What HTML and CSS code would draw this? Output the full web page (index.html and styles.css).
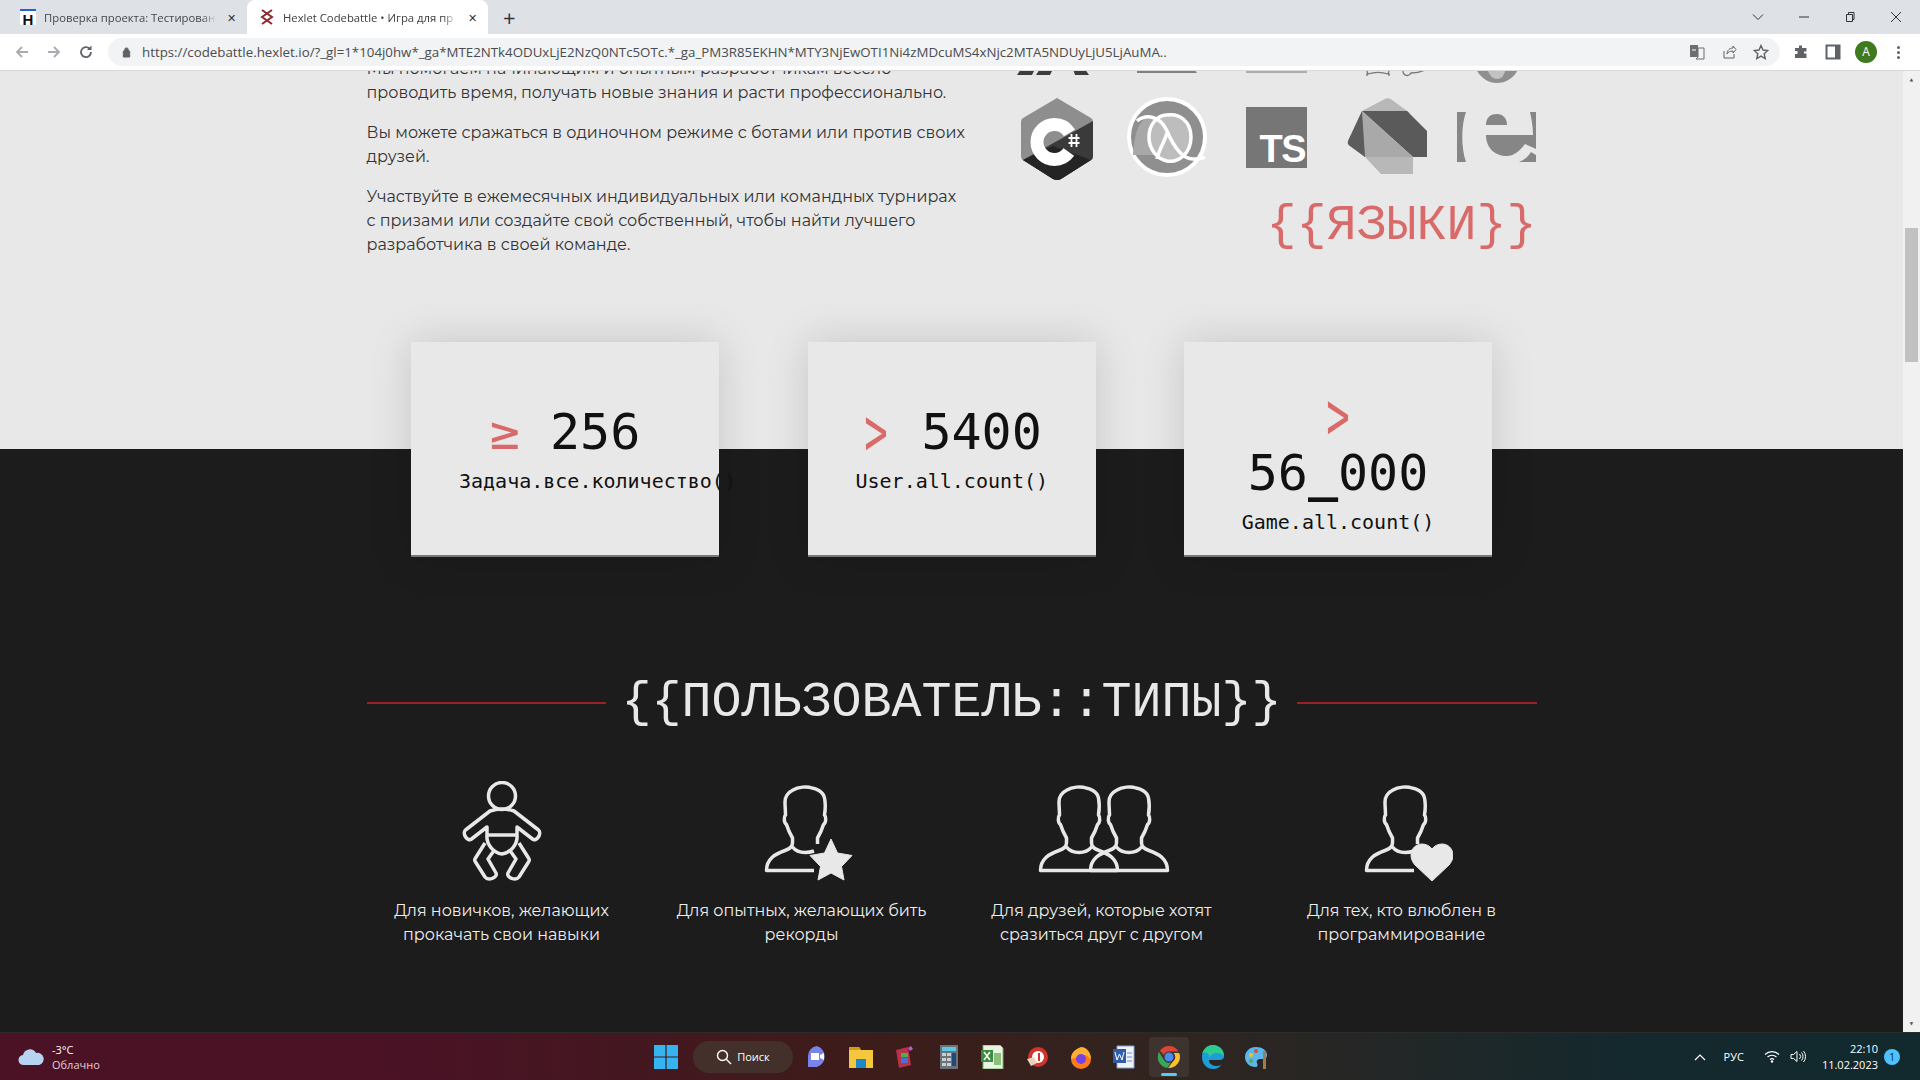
FILE: index.html
```html
<!DOCTYPE html>
<html lang="ru">
<head>
  <meta charset="utf-8">
  <title>Hexlet Codebattle</title>
  <link rel="stylesheet" href="styles.css">
</head>
<body>
  <svg class="defs" width="0" height="0">
    <defs>
      <path id="person" d="M1.500 89.500H78.500C78.500 78 70 73 60 69.500C56 68 52.500 66.500 52.500 62V57C56 51 57.500 47 58.500 43.500C61 42 61.500 36 59.500 34C60.500 28 60.500 22 59.500 17C58 10 50 7.500 47 7C42 5 33 6 28 9C22 12 20 16 20 21C20 25 20.500 30 20.500 34C18.500 36 19 42 21.500 43.500C22.500 47 24 51 27.500 57V62C27.500 66.500 24 68 20 69.500C10 73 1.500 78 1.500 89.500ZM27.500 66C31 70.500 36 71.500 40 71.500C44 71.500 49 70.500 52.500 66"/>
      <path id="person-half" d="M49 89.500H1.500C1.500 78 10 73 20 69.500C24 68 27.500 66.500 27.500 62V57C24 51 22.500 47 21.500 43.500C19 42 18.500 36 20.500 34C20.500 30 20 25 20 21C20 16 22 12 28 9C33 6 42 5 47 7C50 7.500 58 10 59.500 17C60.500 22 60.500 28 59.500 34C61.500 36 61 42 58.500 43.500C57.500 47 56 51 52.500 57V63M27.500 66C31 70.500 36 71.500 40 71.500C43 71.500 46 71 49 70"/>
    </defs>
  </svg>

  <!-- вкладки -->
  <div class="tabstrip">
    <div class="tab">
      <span class="favicon favicon-h">H</span>
      <span class="tab-title">Проверка проекта: Тестирован</span>
      <span class="tab-close">✕</span>
    </div>
    <div class="tab tab-active">
      <svg class="favicon" viewBox="0 0 16 16"><path d="M3 1l10 7-10 7M13 1L3 8l10 7" fill="none" stroke="#8c2a2e" stroke-width="2"/></svg>
      <span class="tab-title">Hexlet Codebattle • Игра для пр</span>
      <span class="tab-close">✕</span>
    </div>
    <span class="tab-new">+</span>
    <div class="window-btns">
      <svg viewBox="0 0 12 12"><path d="M1 3.500l5 5 5-5" fill="none" stroke="#333"/></svg>
      <svg viewBox="0 0 12 12"><path d="M1 6h10" stroke="#333"/></svg>
      <svg viewBox="0 0 12 12"><path d="M2.500 3.500h6v7h-6zM4.500 3.500v-2h5.500v7h-1.500" fill="none" stroke="#333"/></svg>
      <svg viewBox="0 0 12 12"><path d="M1 1l10 10M11 1L1 11" stroke="#333"/></svg>
    </div>
  </div>

  <!-- адресная строка -->
  <div class="toolbar">
    <svg class="nav-icon" viewBox="0 0 16 16"><path d="M14 8H3M8 3L3 8l5 5" fill="none" stroke="#a8abaf" stroke-width="1.800"/></svg>
    <svg class="nav-icon" viewBox="0 0 16 16"><path d="M2 8h11M8 3l5 5-5 5" fill="none" stroke="#a8abaf" stroke-width="1.800"/></svg>
    <svg class="nav-icon" viewBox="0 0 16 16"><path d="M13 8a5 5 0 1 1-1.500-3.500" fill="none" stroke="#5f6368" stroke-width="1.800"/><path d="M13.500 1.500v4.500h-4.500z" fill="#5f6368"/></svg>
    <div class="omnibox">
      <svg class="lock" viewBox="0 0 12 12"><path d="M2.500 5h7v6.500h-7zM4 5V3.500a2 2 0 0 1 4 0V5" fill="#5f6368" stroke="#5f6368"/></svg>
      <span class="url">https://codebattle.hexlet.io/?_gl=1*104j0hw*_ga*MTE2NTk4ODUxLjE2NzQ0NTc5OTc.*_ga_PM3R85EKHN*MTY3NjEwOTI1Ni4zMDcuMS4xNjc2MTA5NDUyLjU5LjAuMA..</span>
      <div class="omni-icons">
        <svg viewBox="0 0 16 16"><path d="M1 1h8v12H1z" fill="#6b6e72"/><path d="M9 4h6v11H7l2-2z" fill="none" stroke="#6b6e72"/><path d="M3 6h4" stroke="#fff"/></svg>
        <svg viewBox="0 0 16 16"><path d="M3 7v7h10v-4M6 10c0-4 3-6 6-6V2l3 3.500L12 9V7c-3 0-5 1-6 3z" fill="none" stroke="#5f6368"/></svg>
        <svg viewBox="0 0 16 16"><path d="M8 1.500l2 4.500 4.800.500-3.600 3.200 1 4.800L8 12.100l-4.200 2.400 1-4.800L1.200 6.500 6 6z" fill="none" stroke="#5f6368" stroke-width="1.400"/></svg>
      </div>
    </div>
    <div class="toolbar-right">
      <svg viewBox="0 0 16 16"><path d="M6 1.500h3V4h4.500v3.500H11v2h2.500v4.500H2V10h2.500V7H2V4h4z" fill="#5f6368"/></svg>
      <svg viewBox="0 0 16 16"><path d="M1.500 1.500h13v13h-13z" fill="#fff" stroke="#5f6368" stroke-width="2"/><path d="M10 1.500h4.500v13H10z" fill="#5f6368"/></svg>
      <span class="avatar">A</span>
      <span class="dots"><i></i><i></i><i></i></span>
    </div>
  </div>

  <div class="viewport">
    <main class="page">
      <section class="light">
        <div class="container about">
          <div class="about-text">
            <p>Мы помогаем начинающим и опытным разработчикам весело<br>проводить время, получать новые знания и расти профессионально.</p>
            <p>Вы можете сражаться в одиночном режиме с ботами или против своих<br>друзей.</p>
            <p>Участвуйте в ежемесячных индивидуальных или командных турнирах<br>с призами или создайте свой собственный, чтобы найти лучшего<br>разработчика в своей команде.</p>
          </div>
          <div class="langs">
            <div class="lang-row lang-row-top">
              <svg width="79" height="12" viewBox="0 0 79 12"><path d="M4 6h14l-3 6H0zM23 6h13l-3 6H19zM56 6h12l4 6H58z" fill="#3c3c3c"/></svg>
              <svg width="60" height="11" viewBox="0 0 60 11"><path d="M0 6h57l3 4H0z" fill="#808080"/></svg>
              <svg width="61" height="11" viewBox="0 0 61 11"><path d="M0 6h61v4H0z" fill="#adadad"/></svg>
              <svg width="76" height="14" viewBox="0 0 76 14"><path d="M18 8l1 3c6-2 14-2 20 0l1-3M18 10v3M40 10v3M54 8c0 5 6 6 8 2 4 0 10-1 14-3" fill="none" stroke="#777" stroke-width="1.300"/></svg>
              <svg width="46" height="20" viewBox="0 0 46 20"><path d="M0 0h46C44 12 34 20 23 20 12 20 3 12 0 0z" fill="#8f8f8f"/><path d="M14 8h17c-1 5-4 8-8 8s-7-3-9-8z" fill="#c2c2c2"/></svg>
            </div>
            <div class="lang-row">
              <svg width="74" height="84" viewBox="0 0 74 84">
                <path d="M37 1l34 20q2 1 2 4v34q0 3-2 4L41 82q-4 2-8 0L3 63q-2-1-2-4V25q0-3 2-4z" fill="#8e8e8e"/>
                <path d="M73 24v35q0 3-2 4L41 82q-4 2-8 0L3 63z" fill="#3a3a3a"/>
                <path d="M71 63L41 82q-4 2-8 0L3 63l30-14z" fill="#242424"/>
                <circle cx="34.500" cy="45" r="17.500" fill="none" stroke="#fff" stroke-width="13" stroke-dasharray="89 21" stroke-dashoffset="-10.700"/>
                <path d="M51.500 37v13M56.500 37v13M48.500 41h11M48.500 46h11" stroke="#fff" stroke-width="1.800"/>
              </svg>
              <svg width="80" height="80" viewBox="0 0 80 80">
                <ellipse cx="40" cy="40" rx="38" ry="38" fill="#8f8f8f" stroke="#fff" stroke-width="4"/>
                <path d="M6 58C8 30 14 20 25 20c14 0 19 20 27 38" fill="#a8a8a8"/>
                <ellipse cx="42" cy="40" rx="22" ry="24" fill="#bdbdbd"/>
                <path d="M10 24c10-8 24-4 30 10 6 14 14 28 26 28 4 0 8 0 12-2M40 18c-10 0-18 10-18 22s8 22 18 24c12 2 24-8 24-24S52 16 40 18M30 62c2-10 8-18 10-26" fill="none" stroke="#fff" stroke-width="3.500"/>
              </svg>
              <div class="lang-ts">TS</div>
              <svg width="80" height="80" viewBox="0 0 80 80">
                <path d="M15 14L38 2q4-2 7 1l18 13H15z" fill="#b8b8b8"/>
                <path d="M15 14h45l20 20v26H66z" fill="#5a5a5a"/>
                <path d="M15 14L1 44q-1 3 2 5l15 11H66z" fill="#a9a9a9"/>
                <path d="M15 14L1 44q-1 3 2 5l15 11z" fill="#5c5c5c"/>
                <path d="M18 60h48v17H34z" fill="#b8b8b8"/>
              </svg>
              <svg class="lang-erl" width="79" height="50" viewBox="0 0 79 50">
                <path d="M0 0h9C4 14 4 36 9 50H0zM29 13C29 5 34 2 40 2C46 2 50 6 50 13zM29 23H79V37L68 32C62 40 56 44 50 44C38 44 29 36 29 23zM79 43V50H62C67 48 71 45 74 40zM73 0H79V23H76C76 13 74 5 73 0z" fill="#868686"/>
              </svg>
            </div>
            <h2 class="langs-title">{{ЯЗЫКИ}}</h2>
          </div>
        </div>
      </section>

      <section class="dark">
        <div class="stats">
          <div class="stat">
            <div class="stat-value"><span class="stat-sign">≥</span> 256</div>
            <div class="stat-label">Задача.все.количество()</div>
          </div>
          <div class="stat stat-narrow">
            <div class="stat-value"><span class="stat-sign stat-sign-gt">&gt;</span> 5400</div>
            <div class="stat-label">User.all.count()</div>
          </div>
          <div class="stat stat-wrapped">
            <div class="stat-value"><span class="stat-sign stat-sign-gt">&gt;</span> 56<span class="stat-underscore">_</span>000</div>
            <div class="stat-label">Game.all.count()</div>
          </div>
        </div>

        <div class="container">
          <div class="types-title">
            <span class="types-line"></span>
            <h2>{{ПОЛЬЗОВАТЕЛЬ::ТИПЫ}}</h2>
            <span class="types-line"></span>
          </div>
          <div class="types">
            <div class="type">
              <svg class="type-icon" width="80" height="100" viewBox="0 0 80 100">
                <circle cx="40" cy="15" r="13.500"/>
                <path d="M28 30L3.500 49C0 52 5 61 9.500 58L25 46V54H55V46L70.500 58C75 61 80 52 76.500 49L52 30Q40 26 28 30ZM25 54C24 64 32 72 40 73C48 72 56 64 55 54M23 62L13.500 77Q12 79 13.500 81L23 96C26 100 36 97 34 92L26 78L31 71M57 62L66.500 77Q68 79 66.500 81L57 96C54 100 44 97 46 92L54 78L49 71"/>
              </svg>
              <p>Для новичков, желающих<br>прокачать свои навыки</p>
            </div>
            <div class="type">
              <svg class="type-icon" width="102" height="100" viewBox="-14 0 102 100">
                <use href="#person-half"/>
                <path class="badge" d="M66 58l6.500 14 14.500 2.500-10.500 11 2.500 13.500-13-7-13 7 2.500-13.500L45 74.500l14.500-2.500z"/>
              </svg>
              <p>Для опытных, желающих бить<br>рекорды</p>
            </div>
            <div class="type">
              <svg class="type-icon" width="136" height="100" viewBox="-5 0 136 100">
                <use href="#person"/>
                <use href="#person" x="50"/>
              </svg>
              <p>Для друзей, которые хотят<br>сразиться друг с другом</p>
            </div>
            <div class="type">
              <svg class="type-icon" width="102" height="100" viewBox="-14 0 102 100">
                <use href="#person-half"/>
                <path class="badge" d="M67 100L50 84C42 75 47 63 57 63C61 63 65 65 67 68C69 65 73 63 77 63C87 63 92 75 84 84Z"/>
              </svg>
              <p>Для тех, кто влюблен в<br>программирование</p>
            </div>
          </div>
        </div>
      </section>
    </main>

    <div class="scrollbar">
      <span class="scroll-arrow">▲</span>
      <div class="scroll-track"><div class="scroll-thumb"></div></div>
      <span class="scroll-arrow">▼</span>
    </div>
  </div>

  <!-- панель задач -->
  <footer class="taskbar">
    <div class="weather">
      <svg width="26" height="20" viewBox="0 0 26 20"><path d="M6 18a5 5 0 0 1-1-10 7 7 0 0 1 13-2 6 6 0 0 1 3 12z" fill="#b7d3f2"/></svg>
      <div>
        <div class="weather-temp">-3°C</div>
        <div class="weather-text">Облачно</div>
      </div>
    </div>
    <div class="task-center">
      <svg class="task-icon" viewBox="0 0 24 24"><path d="M0 0h11.400v11.400H0zM12.600 0H24v11.400H12.600zM0 12.600h11.400V24H0zM12.600 12.600H24V24H12.600z" fill="#35b4f0"/></svg>
      <div class="task-search">
        <svg width="16" height="16" viewBox="0 0 16 16"><circle cx="6.500" cy="6.500" r="5" fill="none" stroke="#fff" stroke-width="1.400"/><path d="M10 10l5 5" stroke="#fff" stroke-width="1.400"/></svg>
        Поиск
      </div>
      <svg class="task-icon" viewBox="0 0 24 24"><path d="M12 1a11 11 0 0 1 0 21H3v-11A10 10 0 0 1 12 1z" fill="#7b83eb"/><path d="M6 8h8v7H6zM15 10l4-2v7l-4-2z" fill="#fff"/></svg>
      <svg class="task-icon" viewBox="0 0 24 24"><path d="M0 2h10l2 3h12v18H0z" fill="#f5c73d"/><path d="M0 2h10l2 3H0z" fill="#d39b1e"/><path d="M7 14h10v9H7z" fill="#1e88c9"/></svg>
      <svg class="task-icon" viewBox="0 0 24 24"><path d="M3 5l12-3 3 18-12 3z" fill="#b8324a"/><path d="M8 8h7v4H8z" fill="#5aa84a"/><path d="M8 13h7v5H8z" fill="#4a6fd0"/><path d="M15 3l3-2 2 3-3 2z" fill="#c05ad0"/></svg>
      <svg class="task-icon" viewBox="0 0 24 24"><path d="M3 0h18v24H3z" fill="#6b7378"/><path d="M5 2h14v4H5z" fill="#58c8e8"/><path d="M5 8h4v3H5zM10 8h4v3h-4zM5 13h4v3H5zM10 13h4v3h-4zM5 18h4v3H5zM10 18h4v3h-4z" fill="#c8ced2"/><path d="M15 8h4v13h-4z" fill="#1f4a78"/></svg>
      <svg class="task-icon" viewBox="0 0 24 24"><path d="M2 0h17l3 3v21H2z" fill="#eaf4e4" stroke="#7cb06a"/><path d="M0 5h12v12H0z" fill="#3a8f3e"/><path d="M3 7l6 8M9 7l-6 8" stroke="#fff" stroke-width="1.500"/><path d="M13 8h7v12h-7z" fill="#8cc07a"/></svg>
      <svg class="task-icon" viewBox="0 0 24 24"><circle cx="13" cy="12" r="10" fill="#d1342c"/><circle cx="13" cy="12" r="6" fill="#fff"/><path d="M14 8v8" stroke="#d1342c" stroke-width="2"/><path d="M2 14l7-2 3 6-6 3z" fill="#e6d3b8"/></svg>
      <svg class="task-icon" viewBox="0 0 24 24"><circle cx="12" cy="14" r="10" fill="#ff7a1a"/><path d="M2 14C2 6 8 4 12 2c6 0 10 6 10 12l-5-4z" fill="#ffb02e"/><circle cx="12" cy="14" r="5" fill="#7542e5"/></svg>
      <svg class="task-icon" viewBox="0 0 24 24"><path d="M4 1h17v22H4z" fill="#eef2fa" stroke="#8aa3d0"/><path d="M0 4h13v14H0z" fill="#2f5dab"/><path d="M2 7l2 8 2.500-6 2.500 6 2-8" fill="none" stroke="#fff"/><path d="M14 8h5M14 12h5M14 16h5" stroke="#6f8fc8"/></svg>
      <div class="task-active">
        <svg class="task-icon" viewBox="0 0 24 24"><path d="M12 1a11 11 0 0 1 9.500 5.500H12A5.500 5.500 0 0 0 6.800 10L2.900 5.700A11 11 0 0 1 12 1z" fill="#dd4436"/><path d="M22.200 8A11 11 0 0 1 11 23l4.700-6.300A5.500 5.500 0 0 0 16.500 8z" fill="#fbc02d"/><path d="M2 7l5 8a5.500 5.500 0 0 0 7 2.500L10 23A11 11 0 0 1 2 7z" fill="#3aa757"/><circle cx="12" cy="12" r="4.500" fill="#4a8af4"/></svg>
        <span class="task-dot"></span>
      </div>
      <svg class="task-icon" viewBox="0 0 24 24"><path d="M1 12C1 5 6 0 12 0c7 0 11 5 11 11 0 3-2 4-5 4H8c0 4 4 6 8 6 2 0 4-1 5-2-2 3-5 5-9 5C5 24 1 18 1 12z" fill="#1f9bd6"/><path d="M8 15c0-4 3-7 8-7 3 0 5 1 7 3 0-6-5-11-11-11C7 0 3 3 1 9c2-2 5-2 7 1z" fill="#2ecc8f"/></svg>
      <svg class="task-icon" viewBox="0 0 24 24"><path d="M11 2C4 2 0 7 0 12c0 6 5 10 10 10 3 0 3-2 2-4-1-3 1-4 4-4h3c2 0 3-2 3-4 0-5-5-8-11-8z" fill="#5cb8ea"/><circle cx="6" cy="10" r="2" fill="#f2c230"/><circle cx="11" cy="6" r="2" fill="#e04a3c"/><circle cx="6" cy="16" r="2" fill="#4caf50"/><path d="M18 6h3v18h-3z" fill="#a8794a"/></svg>
    </div>
    <div class="tray">
      <svg width="12" height="8" viewBox="0 0 12 8"><path d="M1 7l5-5 5 5" fill="none" stroke="#fff" stroke-width="1.200"/></svg>
      <span class="tray-lang">РУС</span>
      <svg width="16" height="13" viewBox="0 0 16 13"><path d="M1 4.500a10 10 0 0 1 14 0M3.500 7a6.500 6.500 0 0 1 9 0M6 9.500a3 3 0 0 1 4 0" fill="none" stroke="#fff" stroke-width="1.100"/><circle cx="8" cy="11.500" r="1.200" fill="#fff"/></svg>
      <svg class="tray-sound" width="16" height="13" viewBox="0 0 16 13"><path d="M1 4.500h2.500L7 1.500v10L3.500 8.500H1zM9.500 4a3.500 3.500 0 0 1 0 5M11.500 2.500a6 6 0 0 1 0 8M13.500 1a8.500 8.500 0 0 1 0 11" fill="none" stroke="#fff"/></svg>
      <div class="clock">
        <div>22:10</div>
        <div>11.02.2023</div>
      </div>
      <span class="notify">1</span>
    </div>
  </footer>
</body>
</html>
```

FILE: styles.css
```css
* { box-sizing: border-box; }

html, body {
  margin: 0;
  height: 100%;
}
body {
  width: 1920px;
  height: 1080px;
  overflow: hidden;
  display: flex;
  flex-direction: column;
  font-family: "Montserrat", "Inter", "Noto Sans", sans-serif;
}
.defs { position: absolute; }

/* вкладки */
.tabstrip {
  height: 34px;
  flex: none;
  display: flex;
  align-items: stretch;
  background: #dee1e6;
  padding-left: 8px;
  font: 11.300px "Open Sans", "Noto Sans", sans-serif;
  color: #45474a;
}
.tab {
  width: 239px;
  display: flex;
  align-items: center;
  padding: 0 9px 0 12px;
  gap: 8px;
}
.tab-active {
  width: 241px;
  background: #fff;
  border-radius: 8px 8px 0 0;
  color: #3c4043;
  padding-left: 12px;
}
.favicon {
  width: 16px;
  height: 16px;
  flex: none;
}
.favicon-h {
  background: #fff;
  color: #111;
  font: bold 15px/17px "Liberation Sans", sans-serif;
  text-align: center;
  border-top: 2px solid #2a5bd7;
}
.tab-title {
  flex: 1;
  min-width: 0;
  white-space: nowrap;
  -webkit-mask-image: linear-gradient(to right, #000 92%, transparent);
  mask-image: linear-gradient(to right, #000 92%, transparent);
}
.tab-close {
  font-size: 11px;
  color: #333;
  width: 14px;
  text-align: center;
}
.tab-new {
  font-size: 22px;
  line-height: 34px;
  color: #333;
  margin-left: 15px;
}
.window-btns {
  margin-left: auto;
  display: flex;
  align-items: center;
  gap: 34px;
  padding: 0 18px 0 0;
}
.window-btns svg {
  width: 12px;
  height: 12px;
}

/* адресная строка */
.toolbar {
  height: 37px;
  flex: none;
  display: flex;
  align-items: center;
  background: #fff;
  border-bottom: 1px solid #d8d9db;
  padding: 0 14px;
}
.nav-icon {
  width: 16px;
  height: 16px;
  margin-right: 16px;
}
.omnibox {
  flex: none;
  width: 1672px;
  height: 28px;
  margin-left: -2px;
  display: flex;
  align-items: center;
  border-radius: 14px;
  background: #f1f3f4;
  padding: 0 11px 0 13px;
}
.lock {
  width: 11px;
  height: 12px;
  margin-right: 10px;
  flex: none;
}
.url {
  font: 13.300px "Open Sans", "Noto Sans", sans-serif;
  color: #4a4c4f;
  white-space: nowrap;
}
.omni-icons {
  margin-left: auto;
  display: flex;
  gap: 16px;
}
.omni-icons svg {
  width: 16px;
  height: 16px;
}
.toolbar-right {
  display: flex;
  align-items: center;
  margin-left: 13px;
  gap: 16px;
}
.toolbar-right svg {
  width: 16px;
  height: 16px;
}
.avatar {
  width: 22px;
  height: 22px;
  margin-left: -2px;
  border-radius: 50%;
  background: #3f7a1f;
  color: #fff;
  font: 12px/22px "Open Sans", sans-serif;
  text-align: center;
}
.dots {
  display: flex;
  flex-direction: column;
  gap: 2px;
  margin-left: 4px;
}
.dots i {
  display: block;
  width: 3px;
  height: 3px;
  border-radius: 50%;
  background: #5f6368;
}

/* страница */
.viewport {
  flex: 1;
  min-height: 0;
  display: flex;
}
.page {
  flex: 1;
  min-width: 0;
  overflow: hidden;
  background: #1c1c1c;
}
.container {
  width: 1170px;
  margin: 0 auto;
}

.light {
  height: 378px;
  overflow: hidden;
  background: #e8e8e8;
  color: #333;
}
.about {
  display: flex;
  justify-content: space-between;
  margin-top: -14px;
  font-size: 16px;
  line-height: 24px;
}
.about-text p {
  margin: 0 0 16px;
  white-space: nowrap;
}
.langs {
  flex: none;
  width: 550px;
  margin-right: -15px;
}
.lang-row {
  display: grid;
  grid-template-columns: repeat(5, 110px);
  justify-items: center;
  align-items: start;
}
.lang-row-top {
  height: 40px;
  padding-top: 6px;
}
.lang-row svg { display: block; }
.lang-ts {
  width: 61px;
  height: 61px;
  margin-top: 10px;
  padding: 0 2px 4px 0;
  display: flex;
  align-items: flex-end;
  justify-content: flex-end;
  background: #767676;
  color: #fff;
  font: bold 38px/30px "Liberation Sans", sans-serif;
  letter-spacing: -1.500px;
}
.lang-erl { margin-top: 15px; }
.langs-title {
  margin: 17px 15px 0 0;
  font: 400 50px/56px "Liberation Mono", monospace;
  color: #d96a6a;
  text-align: right;
}

.dark {
  color: #eee;
}
.stats {
  display: grid;
  grid-template-columns: 308px 288px 308px;
  justify-content: center;
  column-gap: 88.500px;
  margin-top: -107px;
  position: relative;
}
.stat {
  height: 215px;
  padding: 46px 48px 0;
  background: #e8e8e8;
  color: #111;
  border-bottom: 2px solid #777;
  box-shadow: 0 0 40px rgba(0, 0, 0, .15);
  text-align: center;
  font-family: "DejaVu Sans Mono", monospace;
}
.stat-wrapped { padding-top: 30px; }
.stat-value {
  font-size: 50px;
  line-height: 57px;
  margin-top: 16px;
}
.stat-sign { color: #d96a6a; }
.stat-sign-gt {
  display: inline-block;
  transform: scale(.78, 1.35);
}
.stat-underscore { font-weight: bold; }
.stat-label {
  font-size: 20px;
  line-height: 24px;
  margin-top: 8px;
  white-space: nowrap;
}

.types-title {
  display: flex;
  align-items: center;
  gap: 15px;
  margin-top: 118px;
}
.types-title h2 {
  margin: 0;
  font: 400 50px/56px "Liberation Mono", monospace;
  color: #e8e8e8;
  white-space: nowrap;
}
.types-line {
  flex: 1;
  height: 2px;
  background: #9c2126;
}
.types {
  display: grid;
  grid-template-columns: repeat(4, 300px);
  margin: 50px -15px 0;
}
.type {
  text-align: center;
  font-size: 16px;
  line-height: 24px;
}
.type p { margin: 18px 0 0; }
.type-icon {
  display: block;
  margin: 0 auto;
  fill: none;
  stroke: #e8e8e8;
  stroke-width: 3.500;
  stroke-linejoin: round;
}
.badge {
  fill: #e8e8e8;
  stroke-width: 1;
}

/* полоса прокрутки */
.scrollbar {
  width: 17px;
  flex: none;
  display: flex;
  flex-direction: column;
  background: #f1f1f1;
  font-size: 8px;
  color: #505050;
  text-align: center;
}
.scroll-arrow {
  height: 17px;
  line-height: 17px;
  flex: none;
}
.scroll-track {
  flex: 1;
  padding: 140px 2px 0;
}
.scroll-thumb {
  height: 134px;
  background: #c1c1c1;
}

/* панель задач */
.taskbar {
  height: 48px;
  flex: none;
  display: flex;
  align-items: center;
  border-top: 1px solid #2b2b2b;
  background: linear-gradient(to right, #4b1226 0, #4b1226 20%, #3d1c1a 45%, #2f2520 62%, #14292e 85%, #12292e 100%);
  color: #fff;
  font: 11px "Open Sans", "Noto Sans", sans-serif;
}
.weather {
  width: 640px;
  display: flex;
  align-items: center;
  gap: 8px;
  padding-left: 18px;
  line-height: 15px;
}
.weather-text { color: #e2cdd5; }
.task-center {
  display: flex;
  align-items: center;
  gap: 20px;
  margin-left: 14px;
}
.task-icon {
  width: 24px;
  height: 24px;
  flex: none;
}
.task-search {
  width: 100px;
  height: 32px;
  border-radius: 16px;
  background: #43302b;
  display: flex;
  align-items: center;
  justify-content: center;
  gap: 5px;
  margin: 0 -8px 0 -5px;
}
.task-active {
  position: relative;
  width: 40px;
  height: 40px;
  margin: 0 -8px;
  border-radius: 4px;
  background: rgba(255, 255, 255, .07);
  display: flex;
  align-items: center;
  justify-content: center;
}
.task-dot {
  position: absolute;
  left: 12px;
  bottom: 1px;
  width: 16px;
  height: 3px;
  border-radius: 2px;
  background: #5cc8f5;
}
.tray {
  margin-left: auto;
  display: flex;
  align-items: center;
  padding-right: 20px;
}
.tray-lang { margin: 0 20px 0 18px; }
.tray-sound { margin-left: 10px; }
.clock {
  margin-left: 16px;
  text-align: right;
  line-height: 16px;
}
.notify {
  width: 16px;
  height: 16px;
  margin-left: 6px;
  border-radius: 50%;
  background: #4cc2ff;
  color: #0c2a33;
  font-size: 10px;
  line-height: 16px;
  text-align: center;
}
```
